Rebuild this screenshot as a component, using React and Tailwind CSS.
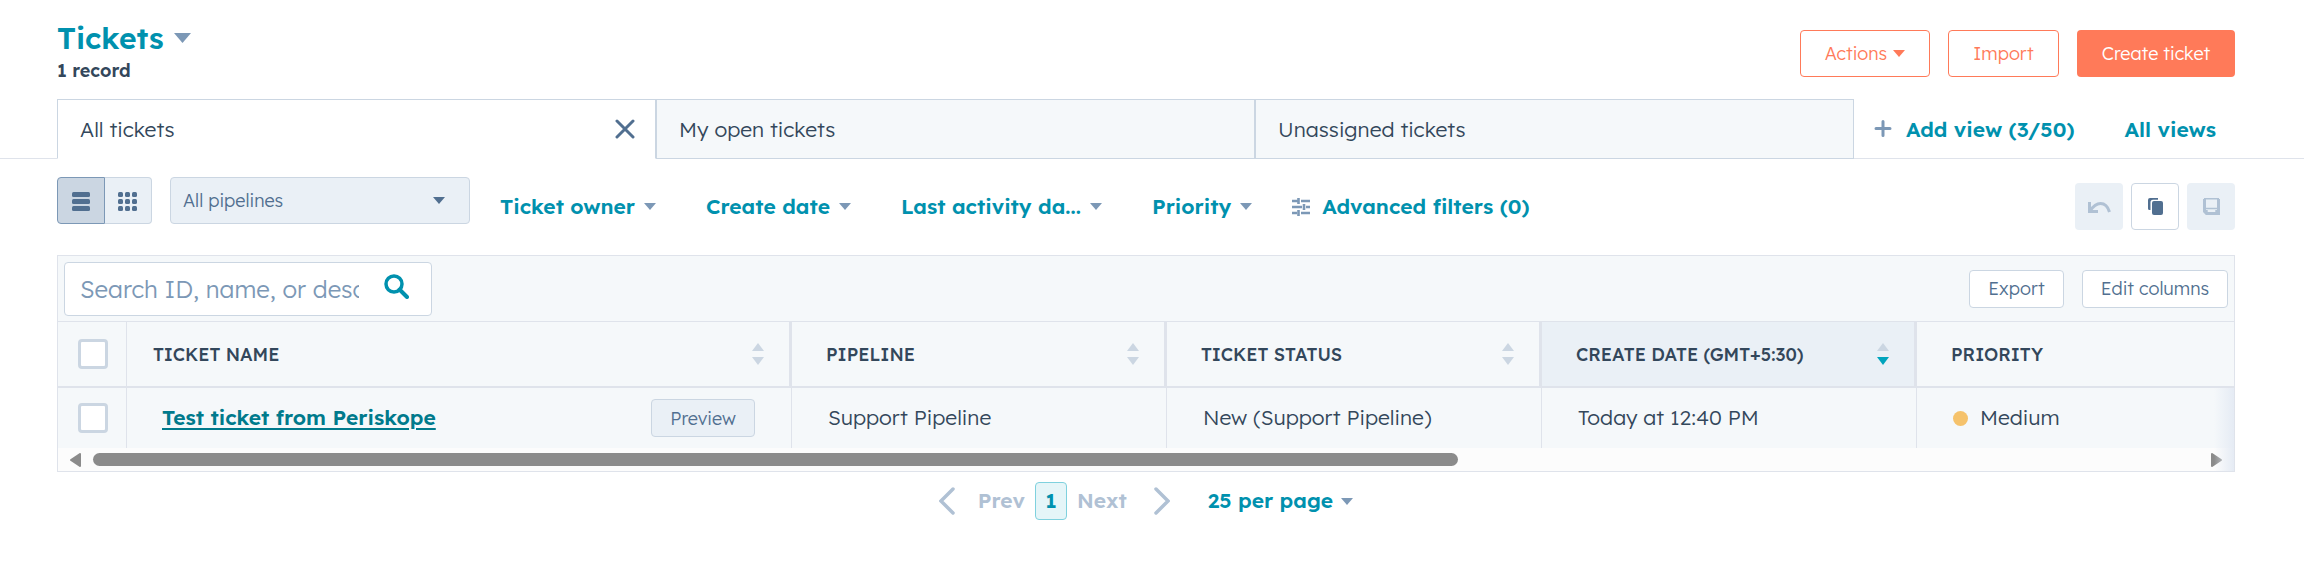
import { useState } from 'react';
import clsx from 'clsx';

const TABS = ['All tickets', 'My open tickets', 'Unassigned tickets'];
const FILTERS = ['Ticket owner', 'Create date', 'Last activity da...', 'Priority'];

const COLUMNS = [
  { label: 'Ticket name', width: 'w-[665px]', pad: 'pl-[26px]', sort: 'none' },
  { label: 'Pipeline', width: 'w-[375px]', pad: 'pl-[34px]', sort: 'none' },
  { label: 'Ticket status', width: 'w-[375px]', pad: 'pl-[34px]', sort: 'none' },
  { label: 'Create date (GMT+5:30)', width: 'w-[375px]', pad: 'pl-[34px]', sort: 'desc' },
  { label: 'Priority', width: '', pad: 'pl-[34px]', sort: null },
];

const TICKETS = [
  {
    id: 1,
    name: 'Test ticket from Periskope',
    pipeline: 'Support Pipeline',
    status: 'New (Support Pipeline)',
    created: 'Today at 12:40 PM',
    priority: 'Medium',
  },
];

function Caret({ className }) {
  return (
    <svg viewBox="0 0 12 7" className={className} aria-hidden="true">
      <path d="M0 0h12L6 7z" fill="currentColor" />
    </svg>
  );
}

function SortArrows({ direction }) {
  return (
    <svg viewBox="0 0 12 22" className="h-[22px] w-3 shrink-0 text-[#cbd6e2]" aria-hidden="true">
      <path d="M6 0l6 8H0z" fill="currentColor" />
      <path d="M0 14h12l-6 8z" fill={direction === 'desc' ? '#00a4bd' : 'currentColor'} />
    </svg>
  );
}

function Checkbox({ label, checked, onChange }) {
  return (
    <input
      type="checkbox"
      aria-label={label}
      checked={checked}
      onChange={onChange}
      className="block size-[30px] appearance-none rounded border-3 border-[#cbd6e2] bg-white checked:bg-[#00a4bd]"
    />
  );
}

function PageHeader() {
  return (
    <header className="flex items-start justify-between pt-[18px] pr-[69px] pb-[15px] pl-[57px]">
      <div>
        <h1>
          <button className="flex items-center gap-[10px] text-[30px] leading-10 font-semibold text-[#0091ae]">
            Tickets
            <Caret className="h-[10px] w-[17px] text-[#7c98b6]" />
          </button>
        </h1>
        <p className="text-[18px] leading-[26px] font-semibold">1 record</p>
      </div>
      <div className="mt-3 flex gap-[18px] text-[18px]">
        <button className="flex h-[47px] w-[130px] items-center justify-center gap-[6px] rounded border border-[#ff7a59] font-light text-[#ff7a59]">
          Actions
          <Caret className="h-[7px] w-3" />
        </button>
        <button className="h-[47px] w-[111px] rounded border border-[#ff7a59] font-light text-[#ff7a59]">Import</button>
        <button className="h-[47px] w-[158px] rounded bg-[#ff7a59] font-light text-white">Create ticket</button>
      </div>
    </header>
  );
}

function ViewTabs() {
  const [active, setActive] = useState('All tickets');

  return (
    <nav className="flex h-[60px] border-b border-[#dfe3eb] pr-[69px] pl-[57px]">
      <div className="-mb-px flex flex-1" role="tablist">
        {TABS.map((tab) => (
          <div
            key={tab}
            className={clsx(
              'flex flex-1 items-center border border-[#cbd6e2]',
              active === tab ? 'border-b-white bg-white' : 'bg-[#f5f8fa]'
            )}
          >
            <button
              role="tab"
              aria-selected={active === tab}
              onClick={() => setActive(tab)}
              className="h-full flex-1 pt-0.5 pl-[22px] text-left text-[21px] font-light"
            >
              {tab}
            </button>
            {active === tab && (
              <button aria-label="Close view" className="mr-5 text-[#516f90]">
                <svg viewBox="0 0 20 20" className="size-5" fill="none" stroke="currentColor" strokeWidth="3" strokeLinecap="round">
                  <path d="M2 2l16 16M18 2L2 18" />
                </svg>
              </button>
            )}
          </div>
        ))}
      </div>
      <div className="flex w-[381px] shrink-0 items-center justify-between pt-0.5 pr-[19px] pl-5 text-[21px] font-semibold text-[#0091ae]">
        <button className="flex items-center gap-[14px]">
          <svg viewBox="0 0 18 20" className="h-5 w-[18px] text-[#7c98b6]" fill="none" stroke="currentColor" strokeWidth="3" strokeLinecap="round">
            <path d="M9 1.500v14M2 8.500h14" />
          </svg>
          Add view (3/50)
        </button>
        <a href="#views">All views</a>
      </div>
    </nav>
  );
}

function FilterBar() {
  const [view, setView] = useState('list');

  return (
    <div className="flex h-[71px] items-end pt-[18px] pr-[69px] pl-[57px]">
      <div className="flex self-start">
        <button
          aria-label="List view"
          onClick={() => setView('list')}
          className={clsx(
            'flex h-[47px] w-12 items-center justify-center rounded-l border',
            view === 'list' ? 'border-[#7c98b6] bg-[#cbd6e2]' : 'border-[#cbd6e2] bg-[#eaf0f6]'
          )}
        >
          <svg viewBox="0 0 18 20" className="h-5 w-[18px] text-[#516f90]" fill="currentColor">
            <rect y="1" width="18" height="5" rx="1.5" />
            <rect y="8" width="18" height="5" rx="1.5" />
            <rect y="15" width="18" height="5" rx="1.5" />
          </svg>
        </button>
        <button
          aria-label="Board view"
          onClick={() => setView('board')}
          className={clsx(
            'flex h-[47px] w-[47px] items-center justify-center rounded-r border border-l-0 pr-[2px]',
            view === 'board' ? 'border-[#7c98b6] bg-[#cbd6e2]' : 'border-[#cbd6e2] bg-[#eaf0f6]'
          )}
        >
          <svg viewBox="0 0 19 20" className="h-5 w-[19px] text-[#516f90]" fill="currentColor">
            {[0, 7, 14].map((x) => [1, 8, 15].map((y) => <rect key={`${x}-${y}`} x={x} y={y} width="5" height="5" rx="1.5" />))}
          </svg>
        </button>
      </div>

      <div className="relative ml-[18px] w-[300px] self-start">
        <select
          aria-label="Pipeline"
          className="h-[47px] w-full appearance-none rounded border border-[#cbd6e2] bg-[#eaf0f6] pl-3 text-[18px] font-light text-[#516f90]"
        >
          <option>All pipelines</option>
          <option>Support Pipeline</option>
        </select>
        <Caret className="pointer-events-none absolute top-5 right-[25px] h-[7px] w-3 text-[#516f90]" />
      </div>

      <div className="ml-[30px] flex h-[47px] items-center gap-[50px] text-[21px] font-semibold text-[#0091ae]">
        {FILTERS.map((filter) => (
          <button key={filter} className="flex items-center gap-[9px]">
            {filter}
            <Caret className="h-[7px] w-3 text-[#7c98b6]" />
          </button>
        ))}
      </div>
      <button className="ml-10 flex h-[47px] items-center gap-3 text-[21px] font-semibold text-[#0091ae]">
        <svg viewBox="0 0 18 18" className="size-[18px] text-[#7c98b6]" fill="none" stroke="currentColor" strokeWidth="2.6">
          <path d="M0 3h7M9 3h9M6.500 0v6M0 9h10M14 9h4M12 6v6M0 15h5M9 15h9M6.500 12v6" />
        </svg>
        Advanced filters (0)
      </button>

      <div className="ml-auto flex gap-2">
        <button aria-label="Undo" className="flex h-[47px] w-12 items-center justify-center rounded bg-[#eaf0f6] text-[#b0c1d4]">
          <svg viewBox="0 0 23 12" className="h-3 w-[23px]" fill="none" stroke="currentColor" strokeWidth="3">
            <path d="M1.500 1v9.500H10M2 10C6 4 9 2.500 12.500 2.500c5 0 7.500 3.500 9 8.500" />
          </svg>
        </button>
        <button aria-label="Clone view" className="flex h-[47px] w-12 items-center justify-center rounded border border-[#cbd6e2] bg-white text-[#516f90]">
          <svg viewBox="0 0 15 17" className="h-[17px] w-[15px]" fill="currentColor">
            <path d="M2 0h8v1.800H5A2.500 2.500 0 0 0 2.500 4.300V12H1.500A1.500 1.500 0 0 1 0 10.500V2a2 2 0 0 1 2-2z" />
            <rect x="4" y="3" width="11" height="14" rx="2" />
          </svg>
        </button>
        <button aria-label="Save view" className="flex h-[47px] w-12 items-center justify-center rounded bg-[#eaf0f6] text-[#b0c1d4]">
          <svg viewBox="0 0 17 17" className="size-[17px]" fill="none" stroke="currentColor">
            <path d="M1.500 1v12.500l2 2h12V1" strokeWidth="3" />
            <path d="M1 .7h15M2 10.500h13" strokeWidth="1.600" />
            <path d="M3.500 12v3M13.500 12v3" strokeWidth="2.400" />
          </svg>
        </button>
      </div>
    </div>
  );
}

function TableToolbar() {
  const [query, setQuery] = useState('');

  return (
    <div className="flex h-[66px] items-center justify-between border-b border-[#dfe3eb] px-[6px]">
      <div className="flex h-[54px] w-[368px] items-center rounded border border-[#cbd6e2] bg-white pr-[22px] pl-[15px]">
        <input
          type="text"
          aria-label="Search tickets"
          value={query}
          onChange={(e) => setQuery(e.target.value)}
          placeholder="Search ID, name, or description"
          className="w-[279px] text-2xl font-light outline-none placeholder:text-[#7c98b6]"
        />
        <button aria-label="Search" className="ml-auto pb-1 text-[#0091ae]">
          <svg viewBox="0 0 25 25" className="size-[25px]" fill="none" stroke="currentColor" strokeWidth="3.500">
            <circle cx="10" cy="10" r="8" />
            <path d="M15.500 15.500l7.500 7.500" strokeWidth="4" strokeLinecap="round" />
          </svg>
        </button>
      </div>
      <div className="flex gap-[18px] text-[18px] font-light text-[#516f90]">
        <button className="h-[38px] w-[95px] rounded border border-[#cbd6e2] bg-white">Export</button>
        <button className="h-[38px] w-[146px] rounded border border-[#cbd6e2] bg-white">Edit columns</button>
      </div>
    </div>
  );
}

function TicketsTable() {
  const [selected, setSelected] = useState([]);
  const allSelected = selected.length === TICKETS.length;

  const toggle = (id) => {
    setSelected((prev) => (prev.includes(id) ? prev.filter((item) => item !== id) : [...prev, id]));
  };

  return (
    <table className="w-full table-fixed border-separate border-spacing-0">
      <thead>
        <tr className="h-[66px]">
          <th className="w-[69px] border-r border-b-2 border-[#dfe3eb] p-0 pl-5">
            <Checkbox
              label="Select all tickets"
              checked={allSelected}
              onChange={() => setSelected(allSelected ? [] : TICKETS.map((t) => t.id))}
            />
          </th>
          {COLUMNS.map((col) => (
            <th
              key={col.label}
              className={clsx(
                'border-b-2 border-[#dfe3eb] p-0 pr-[25px] text-left text-[18px] font-medium uppercase',
                col.width,
                col.pad,
                col.sort && 'border-r-3',
                col.sort === 'desc' && 'bg-[#eaf0f6]'
              )}
            >
              <div className="flex items-center justify-between">
                {col.label}
                {col.sort && <SortArrows direction={col.sort} />}
              </div>
            </th>
          ))}
        </tr>
      </thead>
      <tbody className="text-[21px] font-light">
        {TICKETS.map((ticket) => (
          <tr key={ticket.id} className="h-[60px]">
            <td className="border-r border-[#dfe3eb] p-0 pl-5">
              <Checkbox label={`Select ${ticket.name}`} checked={selected.includes(ticket.id)} onChange={() => toggle(ticket.id)} />
            </td>
            <td className="border-r border-[#dfe3eb] p-0 pr-9 pl-[35px]">
              <div className="flex items-center justify-between">
                <a href="#ticket" className="font-semibold text-[#007a8c] underline decoration-2 underline-offset-3">
                  {ticket.name}
                </a>
                <button className="h-[38px] w-[104px] rounded border border-[#cbd6e2] bg-[#eaf0f6] text-[18px] text-[#516f90]">
                  Preview
                </button>
              </div>
            </td>
            <td className="border-r border-[#dfe3eb] p-0 pl-9">{ticket.pipeline}</td>
            <td className="border-r border-[#dfe3eb] p-0 pl-9">{ticket.status}</td>
            <td className="border-r border-[#dfe3eb] p-0 pl-9">{ticket.created}</td>
            <td className="p-0 pl-9">
              <span className="flex items-center gap-3">
                <span className="size-[15px] rounded-full bg-[#f5c26b]" />
                {ticket.priority}
              </span>
            </td>
          </tr>
        ))}
      </tbody>
    </table>
  );
}

function ScrollTrack() {
  return (
    <div className="flex h-[23px] items-center bg-[#fcfcfc] px-3 text-[#8b8b8b]">
      <svg viewBox="0 0 11 14" className="h-[14px] w-[11px]" fill="currentColor" stroke="currentColor" strokeWidth="2" strokeLinejoin="round">
        <path d="M10 1v12L1 7z" />
      </svg>
      <div className="mx-3 flex-1">
        <div className="h-[13px] w-[64.8%] rounded-full bg-[#8b8b8b]" />
      </div>
      <svg viewBox="0 0 11 14" className="h-[14px] w-[11px]" fill="currentColor" stroke="currentColor" strokeWidth="2" strokeLinejoin="round">
        <path d="M1 1v12l9-6z" />
      </svg>
    </div>
  );
}

function Pagination() {
  return (
    <div className="flex items-center justify-center pt-[10px] text-[21px] font-semibold text-[#b0c1d4]">
      <button className="flex items-center gap-[23px]">
        <svg viewBox="0 0 16 28" className="h-7 w-4" fill="none" stroke="currentColor" strokeWidth="3.500" strokeLinecap="round">
          <path d="M14 2L2 14l12 12" />
        </svg>
        Prev
      </button>
      <button className="mx-[10px] h-[38px] w-8 rounded border border-[#7fd1de] bg-[#e5f5f8] text-[#0091ae]">1</button>
      <button className="flex items-center gap-[27px]">
        Next
        <svg viewBox="0 0 16 28" className="h-7 w-4" fill="none" stroke="currentColor" strokeWidth="3.500" strokeLinecap="round">
          <path d="M2 2l12 12L2 26" />
        </svg>
      </button>
      <button className="ml-[38px] flex items-center gap-2 text-[#0091ae]">
        25 per page
        <Caret className="h-[7px] w-3 text-[#7c98b6]" />
      </button>
    </div>
  );
}

export default function App() {
  return (
    <div className="min-h-screen bg-white font-['Lexend_Deca',Inter,sans-serif] text-[#33475b]">
      <PageHeader />
      <ViewTabs />
      <FilterBar />
      <main className="pt-[25px] pr-[69px] pl-[57px]">
        <section className="relative border border-[#dfe3eb] bg-[#f5f8fa]">
          <TableToolbar />
          <TicketsTable />
          <ScrollTrack />
          <div className="pointer-events-none absolute right-0 bottom-0 h-[83px] w-5 bg-linear-to-r from-transparent to-[#e5ebf4]" />
        </section>
        <Pagination />
      </main>
    </div>
  );
}
